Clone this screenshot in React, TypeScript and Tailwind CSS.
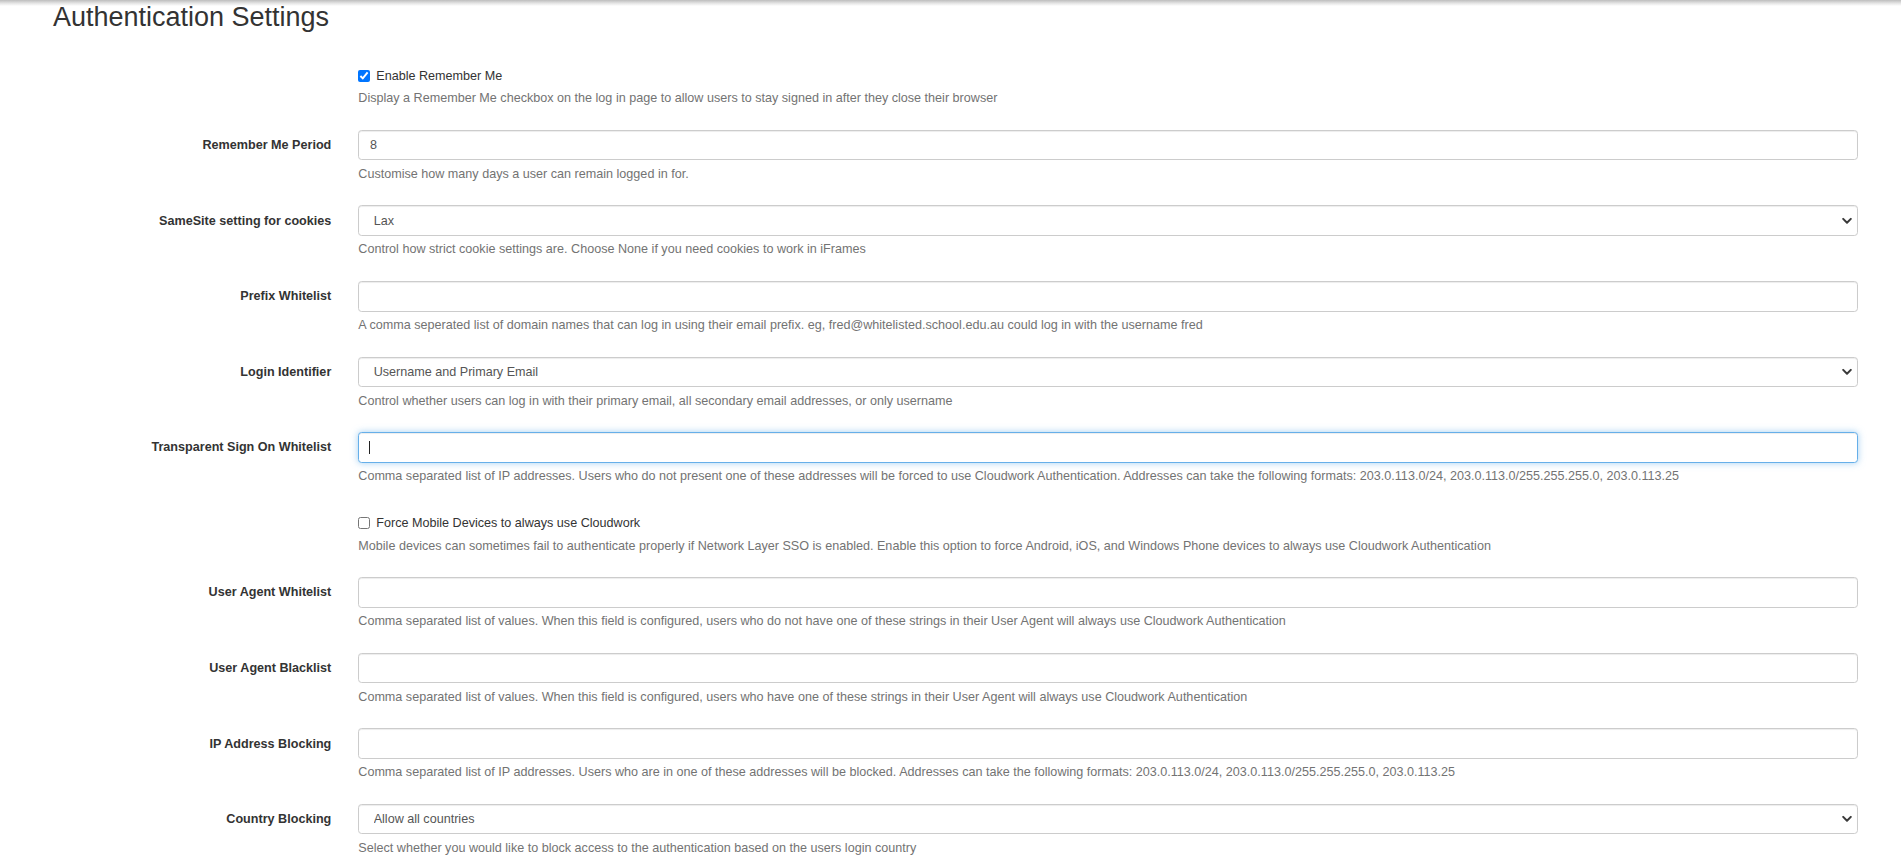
import React from "react";

const inputCls =
  "block w-full h-[30.6px] border border-[#ccc] rounded-[3.6px] bg-white px-[10.8px] text-[12.6px] leading-[18px] text-[#555] shadow-[inset_0_1px_1px_rgba(0,0,0,0.075)] outline-none";

function Help({ children }: { children: React.ReactNode }) {
  return (
    <p className="mt-[4.5px] mb-[9px] text-[12.6px] leading-[18px] text-[#737373] whitespace-nowrap">
      {children}
    </p>
  );
}

function Label({ children }: { children?: React.ReactNode }) {
  return (
    <label className="w-[305.4px] shrink-0 px-[13.5px] pt-[6.3px] text-right text-[12.6px] leading-[18px] font-bold text-[#333]">
      {children}
    </label>
  );
}

function Chevron() {
  return (
    <svg
      className="pointer-events-none absolute right-[6px] top-1/2 -translate-y-1/2"
      width="10"
      height="7"
      viewBox="0 0 10 7"
      fill="none"
    >
      <path d="M1.2 1.4 L5 5.2 L8.8 1.4" stroke="#3a3a3a" strokeWidth="2" strokeLinecap="round" strokeLinejoin="round" />
    </svg>
  );
}

function TextRow({ label, value, help, focused }: { label: string; value?: string; help: string; focused?: boolean }) {
  return (
    <div className="flex mb-[13.5px]">
      <Label>{label}</Label>
      <div className="flex-1 min-w-0 px-[13.5px]">
        <div className="relative">
          <input
            type="text"
            defaultValue={value ?? ""}
            className={
              focused
                ? "block w-full h-[30.6px] border border-[#66afe9] rounded-[3.6px] bg-white px-[10.8px] text-[12.6px] leading-[18px] text-[#555] shadow-[inset_0_1px_1px_rgba(0,0,0,0.075),0_0_7px_rgba(102,175,233,0.6)] outline-none"
                : inputCls
            }
          />
          {focused && (
            <span className="pointer-events-none absolute left-[10.8px] top-[9px] h-[13px] w-px bg-[#222]" />
          )}
        </div>
        <Help>{help}</Help>
      </div>
    </div>
  );
}

function SelectRow({ label, options, help }: { label: string; options: string[]; help: string }) {
  return (
    <div className="flex mb-[13.5px]">
      <Label>{label}</Label>
      <div className="flex-1 min-w-0 px-[13.5px]">
        <div className="relative">
          <select
            defaultValue={options[0]}
            className="block w-full h-[30.6px] appearance-none border border-[#ccc] rounded-[3.6px] bg-white pl-[14.4px] pr-[24px] text-[12.6px] leading-[18px] text-[#555] shadow-[inset_0_1px_1px_rgba(0,0,0,0.075)] outline-none"
          >
            {options.map((o) => (
              <option key={o}>{o}</option>
            ))}
          </select>
          <Chevron />
        </div>
        <Help>{help}</Help>
      </div>
    </div>
  );
}

function CheckRow({ text, help, checked }: { text: string; help: string; checked?: boolean }) {
  return (
    <div className="flex mb-[13.5px]">
      <Label />
      <div className="flex-1 min-w-0 px-[13.5px]">
        <div className="pt-[6.3px] min-h-[24.3px]">
          <label className="flex items-start text-[12.6px] leading-[18px] text-[#333]">
            <span className="w-[18px] shrink-0">
              <input
                type="checkbox"
                defaultChecked={checked}
                className="m-0 mt-[3.4px] block w-[12px] h-[12px] accent-[#0075ff]"
              />
            </span>
            <span>{text}</span>
          </label>
        </div>
        <Help>{help}</Help>
      </div>
    </div>
  );
}

export default function App() {
  return (
    <div className="relative min-h-screen bg-white font-['Liberation_Sans',Arial,Helvetica,sans-serif] text-[#333]">
      <div className="pointer-events-none absolute inset-x-0 top-0 h-[6px] bg-linear-to-b from-[#bdbdbd] via-[#e2e2e2] to-white" />
      <div className="pl-[39.4px] pr-[29.5px]">
        <h2 className="px-[13.5px] pt-[2.5px] text-[27px] leading-[29.7px] font-normal text-[#333]">
          Authentication Settings
        </h2>
        <form className="pt-[28.3px]" onSubmit={(e) => e.preventDefault()}>
          <CheckRow
            checked
            text="Enable Remember Me"
            help="Display a Remember Me checkbox on the log in page to allow users to stay signed in after they close their browser"
          />
          <TextRow
            label="Remember Me Period"
            value="8"
            help="Customise how many days a user can remain logged in for."
          />
          <SelectRow
            label="SameSite setting for cookies"
            options={["Lax", "Strict", "None"]}
            help="Control how strict cookie settings are. Choose None if you need cookies to work in iFrames"
          />
          <TextRow
            label="Prefix Whitelist"
            help="A comma seperated list of domain names that can log in using their email prefix. eg, fred@whitelisted.school.edu.au could log in with the username fred"
          />
          <SelectRow
            label="Login Identifier"
            options={["Username and Primary Email", "Username and All Emails", "Username Only"]}
            help="Control whether users can log in with their primary email, all secondary email addresses, or only username"
          />
          <TextRow
            label="Transparent Sign On Whitelist"
            focused
            help="Comma separated list of IP addresses. Users who do not present one of these addresses will be forced to use Cloudwork Authentication. Addresses can take the following formats: 203.0.113.0/24, 203.0.113.0/255.255.255.0, 203.0.113.25"
          />
          <CheckRow
            text="Force Mobile Devices to always use Cloudwork"
            help="Mobile devices can sometimes fail to authenticate properly if Network Layer SSO is enabled. Enable this option to force Android, iOS, and Windows Phone devices to always use Cloudwork Authentication"
          />
          <TextRow
            label="User Agent Whitelist"
            help="Comma separated list of values. When this field is configured, users who do not have one of these strings in their User Agent will always use Cloudwork Authentication"
          />
          <TextRow
            label="User Agent Blacklist"
            help="Comma separated list of values. When this field is configured, users who have one of these strings in their User Agent will always use Cloudwork Authentication"
          />
          <TextRow
            label="IP Address Blocking"
            help="Comma separated list of IP addresses. Users who are in one of these addresses will be blocked. Addresses can take the following formats: 203.0.113.0/24, 203.0.113.0/255.255.255.0, 203.0.113.25"
          />
          <SelectRow
            label="Country Blocking"
            options={["Allow all countries", "Block selected countries", "Allow selected countries"]}
            help="Select whether you would like to block access to the authentication based on the users login country"
          />
        </form>
      </div>
    </div>
  );
}
